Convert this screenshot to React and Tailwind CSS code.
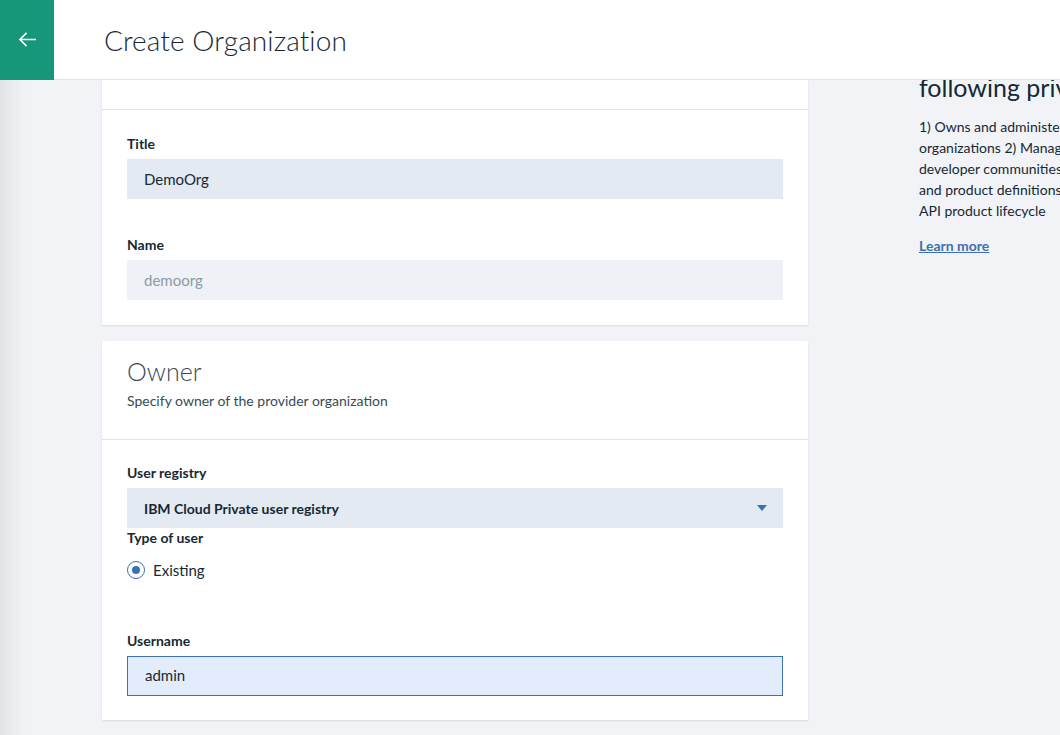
import { useState } from 'react';

// ── Icons ──────────────────────────────────────────────────────────────────

function ArrowLeftIcon({ className }) {
  return (
    <svg className={className} viewBox="0 0 20 20" fill="none" stroke="currentColor" strokeWidth="1.6">
      <path d="M19 10H2M9 3l-7 7 7 7" />
    </svg>
  );
}

function CaretDownIcon({ className }) {
  return (
    <svg className={className} viewBox="0 0 10 6" fill="currentColor">
      <path d="M0 0h10L5 6z" />
    </svg>
  );
}

// ── Form bits ──────────────────────────────────────────────────────────────

function Label({ children }) {
  return <p className="text-[14px] leading-[18px] font-bold text-[#152935] mb-[6px]">{children}</p>;
}

function TextField({ label, value, disabled, focused, className = '' }) {
  return (
    <div className={className}>
      <Label>{label}</Label>
      <div
        className={`h-10 flex items-center px-[17px] text-[15px] ${
          focused
            ? 'bg-[#e3ecfb] border border-[#3d70b2] px-[16px] text-[#152935]'
            : disabled
            ? 'bg-[#eef1f5] text-[#8c9ba5]'
            : 'bg-[#e4eaf2] text-[#152935]'
        }`}
      >
        {value}
      </div>
    </div>
  );
}

// ── App ────────────────────────────────────────────────────────────────────

export default function App() {
  const [userType] = useState('existing');

  return (
    <div className="relative w-[1060px] h-[735px] overflow-hidden bg-[#f1f3f7] font-['Lato',sans-serif]">
      {/* Header */}
      <header className="relative z-10 h-20 flex items-center bg-white border-b border-[#dfe3e8]">
        <button className="w-[54px] h-20 bg-[#16977a] flex items-center justify-center text-white">
          <ArrowLeftIcon className="w-[19px] h-[19px]" />
        </button>
        <h1 className="ml-[50px] text-[28px] font-light text-[#152935] tracking-[0.1px]">Create Organization</h1>
      </header>

      <div className="flex">
        {/* Left gutter */}
        <div className="w-[102px] shrink-0 bg-gradient-to-r from-[#e2e4e8] via-[#f1f3f7] via-[25%] to-[#f1f3f7]" />

        {/* Cards */}
        <div className="w-[706px] shrink-0 flex flex-col gap-4">
          <section className="bg-white shadow-[0_1px_2px_rgba(0,0,0,0.1)]">
            <div className="h-[30px] border-b border-[#dfe3e8]" />
            <div className="px-[25px] pt-[25px] pb-[25px]">
              <TextField label="Title" value="DemoOrg" />
              <TextField label="Name" value="demoorg" disabled className="mt-[37px]" />
            </div>
          </section>

          <section className="bg-white shadow-[0_1px_2px_rgba(0,0,0,0.1)]">
            <div className="px-[25px] pt-[15px] pb-[28px] border-b border-[#dfe3e8]">
              <h2 className="text-[25px] leading-[30px] font-light text-[#3d4a53]">Owner</h2>
              <p className="mt-[5px] text-[14px] leading-[20px] text-[#394a54]">Specify owner of the provider organization</p>
            </div>
            <div className="px-[25px] pt-[24px] pb-[24px]">
              <Label>User registry</Label>
              <div className="h-10 flex items-center justify-between pl-[17px] pr-[16px] bg-[#e4eaf2]">
                <span className="text-[14px] font-bold text-[#152935]">IBM Cloud Private user registry</span>
                <CaretDownIcon className="w-[10px] h-[6px] text-[#3d70b2]" />
              </div>
              <div className="mt-[1px]">
                <Label>Type of user</Label>
                <label className="mt-[12px] flex items-center gap-[8px] text-[15px] text-[#152935]">
                  <span className="w-[18px] h-[18px] rounded-full border-[1.5px] border-[#3d70b2] flex items-center justify-center">
                    {userType === 'existing' && <span className="w-[8px] h-[8px] rounded-full bg-[#3d70b2]" />}
                  </span>
                  Existing
                </label>
              </div>
              <TextField label="Username" value="admin" focused className="mt-[50px]" />
            </div>
          </section>
          <div className="h-8" />
        </div>

        {/* Right help panel */}
        <aside className="pl-[111px] shrink-0">
          <h3 className="-mt-[8px] text-[25px] leading-[30px] text-[#152935] whitespace-nowrap">following privileges:</h3>
          <div className="mt-[14px] text-[14px] leading-[21px] text-[#152935] whitespace-nowrap">
            <p>1) Owns and administers provider</p>
            <p>organizations 2) Manages</p>
            <p>developer communities</p>
            <p>and product definitions, and</p>
            <p>API product lifecycle</p>
          </div>
          <a href="#" className="inline-block mt-[14px] text-[14px] font-bold text-[#3d70b2] underline">Learn more</a>
        </aside>
      </div>
    </div>
  );
}
